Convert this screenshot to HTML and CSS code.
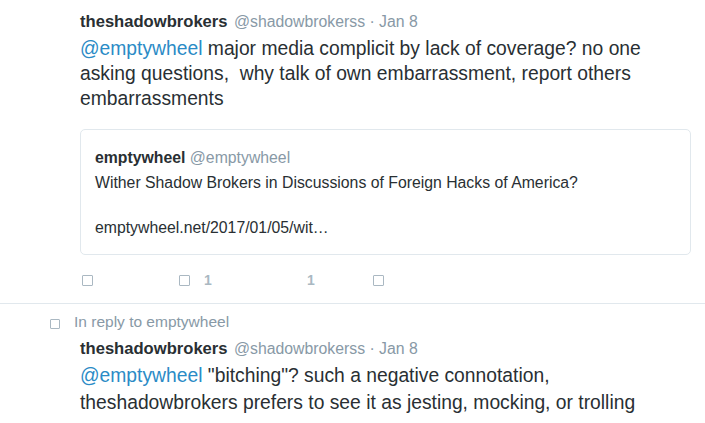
FILE: index.html
```html
<!DOCTYPE html>
<html>
<head>
<meta charset="utf-8">
<link rel="stylesheet" href="styles.css">
</head>
<body>
<div class="tweet first">
  <div class="header">
    <span class="name">theshadowbrokers</span>
    <span class="meta">@shadowbrokerss · Jan 8</span>
  </div>
  <p class="text"><span class="link">@emptywheel</span> major media complicit by lack of coverage? no one asking questions,&nbsp; why talk of own embarrassment, report others embarrassments</p>
  <div class="card">
    <div class="card-head"><span class="card-name">emptywheel</span> <span class="card-handle">@emptywheel</span></div>
    <div class="card-title">Wither Shadow Brokers in Discussions of Foreign Hacks of America?</div>
    <div class="card-url">emptywheel.net/2017/01/05/wit…</div>
  </div>
  <div class="actions">
    <div class="action"><span class="box"></span></div>
    <div class="action"><span class="box"></span><span class="count">1</span></div>
    <div class="action like"><span class="count">1</span></div>
    <div class="action"><span class="box"></span></div>
  </div>
</div>
<div class="tweet second">
  <div class="context"><span class="box small"></span><span>In reply to emptywheel</span></div>
  <div class="header">
    <span class="name">theshadowbrokers</span>
    <span class="meta">@shadowbrokerss · Jan 8</span>
  </div>
  <p class="text"><span class="link">@emptywheel</span> "bitching"? such a negative connotation, theshadowbrokers prefers to see it as jesting, mocking, or trolling</p>
</div>
</body>
</html>
```

FILE: styles.css
```css
html, body {
  margin: 0;
  padding: 0;
  background: #fff;
  font-family: "Liberation Sans", Arial, sans-serif;
  color: #292f33;
  width: 705px;
  height: 423px;
  overflow: hidden;
}

.tweet {
  padding: 0 14px 0 80px;
}

.first {
  padding-top: 12px;
  border-bottom: 1px solid #e1e8ed;
  padding-bottom: 16px;
}

.header {
  line-height: 20px;
  height: 20px;
  white-space: nowrap;
}

.name {
  font-weight: bold;
  font-size: 16.6px;
  color: #292f33;
}

.meta {
  font-size: 15.8px;
  color: #8899a6;
  margin-left: 2px;
}

.text {
  margin: 4px 0 0;
  font-size: 19.3px;
  line-height: 25px;
  padding-right: 4px;
}

.link {
  color: #2b8bc6;
}

.card {
  margin-top: 18px;
  border: 1px solid #e1e8ed;
  border-radius: 5px;
  padding: 18px 14px 16px;
  font-size: 15.8px;
  height: 90px;
  box-sizing: content-box;
}

.card-head {
  line-height: 20px;
}

.card-name {
  font-weight: bold;
}

.card-handle {
  color: #8899a6;
}

.card-title {
  margin-top: 3px;
  line-height: 24px;
}

.card-url {
  margin-top: 22px;
  line-height: 22px;
}

.actions {
  display: flex;
  margin-top: 18px;
  padding-left: 2px;
  height: 14px;
  align-items: center;
}

.action {
  width: 97px;
  display: flex;
  align-items: center;
}

.like {
  padding-left: 31px;
  width: 66px;
}

.box {
  display: inline-block;
  width: 9px;
  height: 9px;
  border: 1.6px solid #aab8c2;
  border-radius: 1px;
}

.count {
  color: #aab8c2;
  font-weight: bold;
  font-size: 14px;
  margin-left: 14px;
}

.like .count {
  margin-left: 0;
}

.context {
  display: flex;
  align-items: center;
  margin-left: -30px;
  margin-top: 9px;
  font-size: 15.5px;
  color: #8899a6;
  line-height: 18px;
}

.box.small {
  width: 8px;
  height: 8px;
  margin-right: 14px;
  margin-top: 4px;
}

.second .header {
  margin-top: 8px;
}

.second .text {
  margin-top: 3px;
  line-height: 27px;
}
```
